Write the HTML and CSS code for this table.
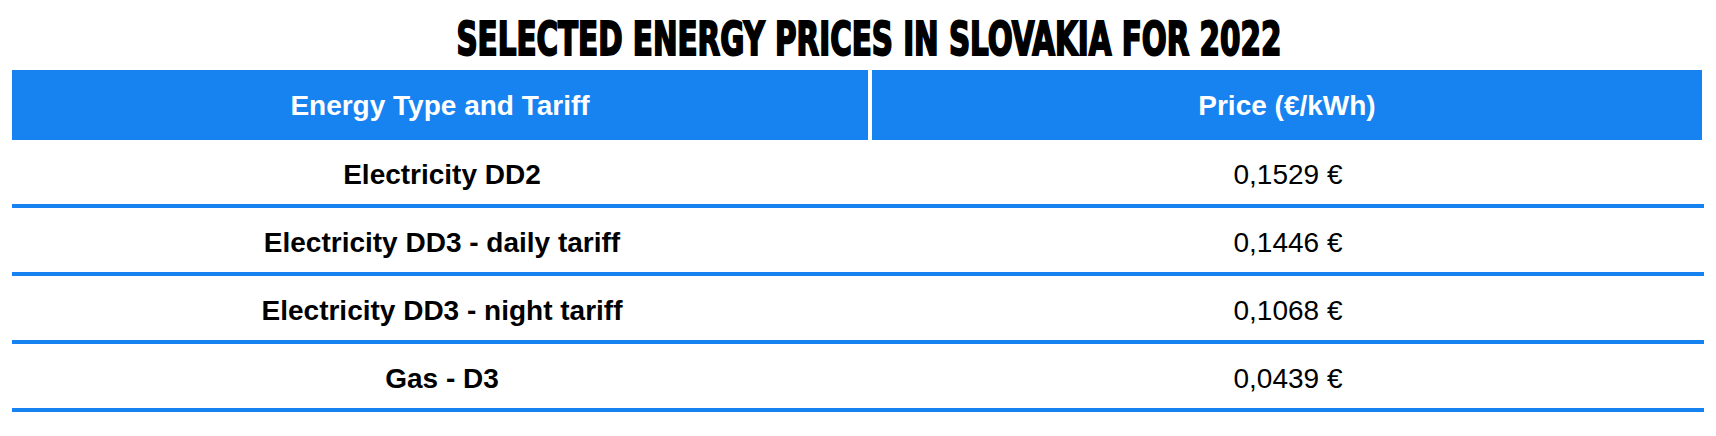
FILE: index.html
```html
<!DOCTYPE html>
<html lang="en">
<head>
<meta charset="utf-8">
<title>Selected Energy Prices in Slovakia for 2022</title>
<link rel="stylesheet" href="styles.css">
</head>
<body>
<main class="page">
  <h1 class="title"><span class="title-text">SELECTED ENERGY PRICES IN SLOVAKIA FOR 2022</span></h1>
  <div class="table">
    <div class="head">
      <div class="hcell">Energy Type and Tariff</div>
      <div class="hcell">Price (€/kWh)</div>
    </div>
    <div class="row">
      <div class="cell name">Electricity DD2</div>
      <div class="cell price">0,1529 €</div>
    </div>
    <div class="row">
      <div class="cell name">Electricity DD3 - daily tariff</div>
      <div class="cell price">0,1446 €</div>
    </div>
    <div class="row">
      <div class="cell name">Electricity DD3 - night tariff</div>
      <div class="cell price">0,1068 €</div>
    </div>
    <div class="row">
      <div class="cell name">Gas - D3</div>
      <div class="cell price">0,0439 €</div>
    </div>
  </div>
</main>
</body>
</html>
```

FILE: styles.css
```css
html, body {
  margin: 0;
  padding: 0;
  background: #ffffff;
}

.page {
  width: 1716px;
  height: 436px;
  padding: 0 12px;
  box-sizing: border-box;
  font-family: "Liberation Sans", Arial, sans-serif;
  color: #000;
}

.title {
  margin: 0;
  height: 70px;
  display: flex;
  align-items: center;
  justify-content: center;
  padding-left: 22px;
  box-sizing: border-box;
}

.title-text {
  display: inline-block;
  font-family: "DejaVu Sans", sans-serif;
  font-stretch: condensed;
  font-weight: 700;
  font-size: 46px;
  line-height: 1;
  letter-spacing: 0;
  -webkit-text-stroke: 2px #000;
  transform: scaleX(0.71);
  transform-origin: center;
  white-space: nowrap;
  margin-top: 8px;
}

.table {
  width: 1692px;
  display: flex;
  flex-direction: column;
}

.head {
  display: grid;
  grid-template-columns: 856px 830px;
  column-gap: 4px;
  margin-right: 2px;
  height: 70px;
}

.hcell {
  background: #1783f0;
  color: #fff;
  font-weight: 700;
  font-size: 28px;
  display: flex;
  align-items: center;
  justify-content: center;
  padding-top: 1px;
}

.row {
  display: grid;
  grid-template-columns: 860px 832px;
  height: 64px;
  border-bottom: 4px solid #1783f0;
}

.cell {
  display: flex;
  align-items: center;
  justify-content: center;
  font-size: 28px;
  padding-top: 5px;
}

.name {
  font-weight: 700;
}

.price {
  font-weight: 400;
}
```
